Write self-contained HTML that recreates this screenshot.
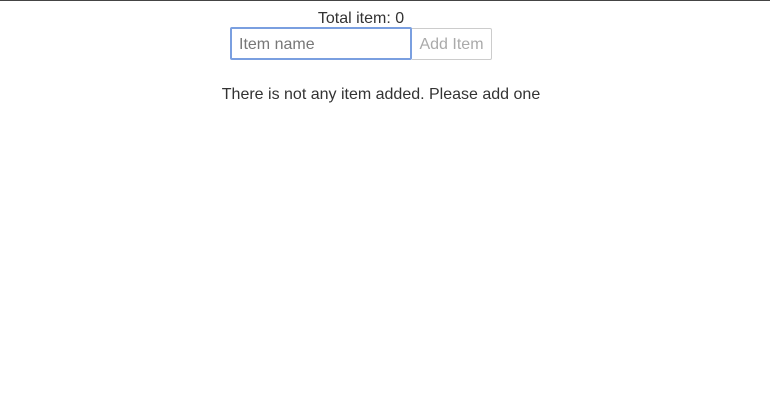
<!DOCTYPE html>
<html><head><style>
html,body{margin:0;padding:0;}
body{width:770px;height:400px;background:#fff;font-family:"Liberation Sans",sans-serif;color:#333;position:relative;overflow:hidden;}
.top{position:absolute;left:0;top:0;width:770px;height:1px;background:#444;}
.t{position:absolute;left:0;width:722px;text-align:center;top:10px;font-size:16px;color:#333;}
.inp{position:absolute;left:230px;top:27px;border:2px solid #7a9fe0;border-radius:2px;box-sizing:border-box;width:182px;height:33px;font-size:16px;color:#777;padding:7px 0 0 7px;}
.btn{position:absolute;left:412px;top:28px;width:80px;height:32px;box-sizing:border-box;border:1px solid #ccc;border-left:none;border-radius:0 2px 2px 0;font-size:16px;color:#aaa;text-align:center;padding-top:7px;}
.msg{position:absolute;left:0;width:762px;text-align:center;top:86px;font-size:16px;color:#333;}
</style></head><body>
<div class="top"></div>
<div class="t">Total item: 0</div>
<div class="inp">Item name</div>
<div class="btn">Add Item</div>
<div class="msg">There is not any item added. Please add one</div>
</body></html>
